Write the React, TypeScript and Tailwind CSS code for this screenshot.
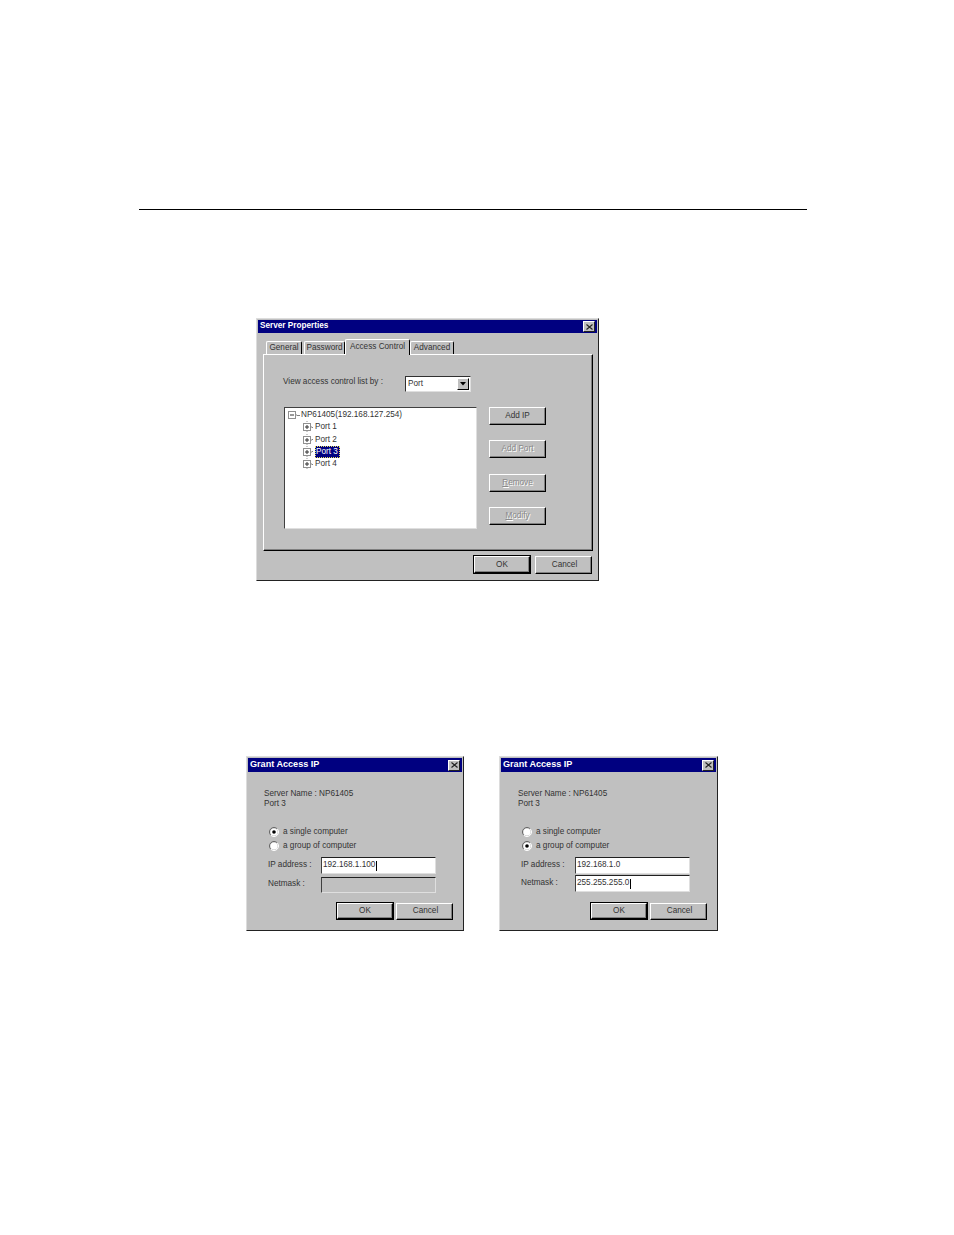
/* Scanned manual page: three Win95-style dialogs under a rule. */

import type { ReactNode } from "react";

const font = "font-['Liberation_Sans',Arial,sans-serif]";

function TitleBar({ title, text, height }: { title: string; text: string; height: string }) {
  return (
    <div className={`flex items-center justify-between bg-[#000080] pl-[2px] pr-[2px] ${height}`}>
      <span className={`${text} font-bold leading-none text-white`}>{title}</span>
      <span className="flex h-[11px] w-[12px] items-center justify-center border border-b-[#222] border-l-white border-r-[#222] border-t-white bg-[#c0c0c0]">
        <svg width="7" height="6" viewBox="0 0 7 6">
          <path d="M0.5 0.5 L6.5 5.5 M6.5 0.5 L0.5 5.5" stroke="#222" strokeWidth="1.1" />
        </svg>
      </span>
    </div>
  );
}

function Btn({
  label,
  disabled,
  strong,
  className,
}: {
  label: ReactNode;
  disabled?: boolean;
  strong?: boolean;
  className: string;
}) {
  return (
    <div
      className={[
        "flex items-center justify-center border border-b-black border-l-white border-r-black border-t-white bg-[#c0c0c0] text-[8.2px] shadow-[inset_-1px_-1px_0_#808080]",
        disabled ? "text-[#8a8a8a] [text-shadow:1px_1px_0_#fff]" : "text-[#333]",
        strong ? "outline outline-1 outline-black" : "",
        className,
      ].join(" ")}
    >
      {label}
    </div>
  );
}

function Tab({ label, active, width }: { label: string; active?: boolean; width: string }) {
  return (
    <div
      className={[
        "flex items-center justify-center rounded-t-[2px] border-l border-r border-t border-l-white border-r-black border-t-white text-[8.2px] text-[#333]",
        active ? "relative z-10 -mb-px h-[16px] self-end bg-[#c0c0c0] pb-px" : "h-[13px] self-end pt-px",
        width,
      ].join(" ")}
    >
      {label}
    </div>
  );
}

function PlusBox({ minus }: { minus?: boolean }) {
  return (
    <svg width="9" height="12" viewBox="0 0 9 12" className="shrink-0">
      {!minus && <path d="M4 0 V2 M4 10 V12" stroke="#999" strokeDasharray="1 1" />}
      <rect x="0.5" y="2.5" width="7" height="7" fill="#fff" stroke="#909090" />
      <path d={minus ? "M2 6 H6" : "M2 6 H6 M4 4 V8"} stroke="#333" />
      <path d="M8 6 H9" stroke="#808080" />
    </svg>
  );
}

function TreeRow({ label, selected, root }: { label: string; selected?: boolean; root?: boolean }) {
  return (
    <div className={["flex h-[12.25px] items-center", root ? "pl-[3px]" : "pl-[18px]"].join(" ")}>
      <PlusBox minus={root} />
      <span className={["border-t border-dotted border-[#808080]", root ? "mr-[2px] w-[2px]" : "mr-[2px] w-px"].join(" ")} />
      <span
        className={
          selected
            ? "border border-dotted border-[#e8e060] bg-[#000080] pr-px leading-[10px] text-white"
            : "text-[#333]"
        }
      >
        {label}
      </span>
    </div>
  );
}

function Radio({ on }: { on?: boolean }) {
  return (
    <svg width="10" height="10" viewBox="0 0 10 10" className="shrink-0">
      <path d="M8.2 1.8 A4.5 4.5 0 0 0 1.8 8.2" fill="none" stroke="#666" />
      <path d="M8.2 1.8 A4.5 4.5 0 0 1 1.8 8.2" fill="none" stroke="#fff" />
      <circle cx="5" cy="5" r="3.6" fill="#fff" />
      {on && <circle cx="5" cy="5" r="1.8" fill="#000" />}
    </svg>
  );
}

function Field({
  value,
  caret,
  disabled,
  cls,
}: {
  value?: string;
  caret?: boolean;
  disabled?: boolean;
  cls: string;
}) {
  return (
    <div
      className={[
        "flex w-[115px] items-center border border-b-[#dfdfdf] border-l-[#404040] border-r-[#dfdfdf] border-t-[#202020] pl-[1px] text-[8.2px] text-[#333]",
        disabled ? "bg-[#c0c0c0]" : "bg-white",
        cls,
      ].join(" ")}
    >
      {value && <span>{value}</span>}
      {caret && <span className="ml-[1px] h-[10px] w-px bg-black" />}
    </div>
  );
}

function ServerDialog() {
  return (
    <div className="ml-[256px] h-[263px] w-[343px] border border-b-[#222] border-l-[#dcdcdc] border-r-[#222] border-t-[#dcdcdc] bg-[#c0c0c0] p-px">
      <TitleBar title="Server Properties" text="text-[8.2px]" height="h-[13px]" />

      <div className="flex h-[21px] items-end pl-[8px]">
        <Tab label="General" width="w-[36px]" />
        <span className="w-[2px]" />
        <Tab label="Password" width="w-[41px]" />
        <Tab label="Access Control" active width="w-[65px]" />
        <Tab label="Advanced" width="w-[44px]" />
      </div>

      <div className="ml-[5px] h-[197px] w-[330px] border border-b-black border-l-white border-r-black border-t-white pl-[19px] pt-[20px] shadow-[inset_-1px_-1px_0_#808080]">
        <div className="flex h-[15px] items-center text-[8.2px] text-[#333]">
          <span className="w-[122px]">View access control list by :</span>
          <div className="mt-[2px] flex h-[16px] w-[66px] items-center justify-between border border-b-[#dfdfdf] border-l-[#303030] border-r-[#dfdfdf] border-t-[#303030] bg-white pl-[2px] pr-px">
            <span className="pt-px">Port</span>
            <span className="flex h-[12px] w-[12px] items-center justify-center border border-b-black border-l-white border-r-black border-t-white bg-[#c0c0c0]">
              <svg width="6" height="4" viewBox="0 0 6 4">
                <path d="M0 0 H6 L3 3.5 Z" fill="#000" />
              </svg>
            </span>
          </div>
        </div>

        <div className="ml-px mt-[17px] flex">
          <div className="h-[122px] w-[193px] border border-b-[#dfdfdf] border-l-[#404040] border-r-[#dfdfdf] border-t-[#404040] bg-white pt-px text-[8.2px] leading-none">
            <TreeRow label="NP61405(192.168.127.254)" root />
            <TreeRow label="Port 1" />
            <TreeRow label="Port 2" />
            <TreeRow label="Port 3" selected />
            <TreeRow label="Port 4" />
          </div>
          <div className="ml-[12px] flex flex-col">
            <Btn label="Add IP" className="h-[18px] w-[57px]" />
            <Btn label="Add Port" disabled className="mt-[15px] h-[18px] w-[57px]" />
            <Btn
              label={
                <span>
                  <span className="underline">R</span>emove
                </span>
              }
              disabled
              className="mt-[16px] h-[18px] w-[57px]"
            />
            <Btn
              label={
                <span>
                  <span className="underline">M</span>odify
                </span>
              }
              disabled
              className="mt-[15px] h-[18px] w-[57px]"
            />
          </div>
        </div>
      </div>

      <div className="mt-[5px] flex justify-end gap-[5px] pr-[5px]">
        <Btn label="OK" strong className="h-[17px] w-[56px] pt-px" />
        <Btn label="Cancel" className="h-[18px] w-[57px] pl-[2px]" />
      </div>
    </div>
  );
}

function GrantDialog({
  textPl,
  radioPl,
  labelPl,
  labelW,
  second,
}: {
  textPl: string;
  radioPl: string;
  labelPl: string;
  labelW: string;
  second?: boolean;
}) {
  return (
    <div
      className={[
        "h-[175px] border border-b-[#222] border-l-[#dcdcdc] border-r-[#222] border-t-[#dcdcdc] bg-[#c0c0c0] p-px text-[8.2px] text-[#333]",
        second ? "w-[219px]" : "w-[218px]",
      ].join(" ")}
    >
      <TitleBar title="Grant Access IP" text="text-[9.1px]" height="h-[14px]" />

      <div className={`mt-[17px] leading-[10px] ${textPl}`}>
        <div>Server Name : NP61405</div>
        <div>Port 3</div>
      </div>

      <div className={`mt-[18px] flex flex-col gap-[4px] ${radioPl}`}>
        <div className="flex h-[10px] items-center gap-[4px]">
          <Radio on={!second} />
          <span>a single computer</span>
        </div>
        <div className="flex h-[10px] items-center gap-[4px]">
          <Radio on={second} />
          <span>a group of computer</span>
        </div>
      </div>

      <div className={`mt-[6px] flex items-center ${labelPl}`}>
        <span className={labelW}>IP address :</span>
        <Field value={second ? "192.168.1.0" : "192.168.1.100"} caret={!second} cls="h-[17px]" />
      </div>
      <div className={`flex items-center ${labelPl} ${second ? "mt-px" : "mt-[3px]"}`}>
        <span className={`${labelW} ${second ? "" : "-mt-[2px]"}`}>Netmask :</span>
        {second ? (
          <Field value="255.255.255.0" caret cls="h-[17px]" />
        ) : (
          <Field disabled cls="h-[16px]" />
        )}
      </div>

      <div className={`flex justify-end gap-[3px] pr-[9px] ${second ? "mt-[11px]" : "mt-[10px]"}`}>
        <Btn label="OK" strong className="h-[16px] w-[56px]" />
        <Btn label="Cancel" className="h-[17px] w-[57px] pl-[2px]" />
      </div>
    </div>
  );
}

export default function App() {
  return (
    <div className={`h-[1235px] w-[954px] overflow-hidden bg-white pt-[209px] ${font}`}>
      <div className="ml-[139px] h-px w-[668px] bg-black" />
      <div className="mt-[108px]">
        <ServerDialog />
      </div>
      <div className="ml-[246px] mt-[175px] flex gap-[35px]">
        <GrantDialog textPl="pl-[16px]" radioPl="pl-[21px]" labelPl="pl-[20px]" labelW="w-[53px]" />
        <GrantDialog textPl="pl-[17px]" radioPl="pl-[21px]" labelPl="pl-[20px]" labelW="w-[54px]" second />
      </div>
    </div>
  );
}
